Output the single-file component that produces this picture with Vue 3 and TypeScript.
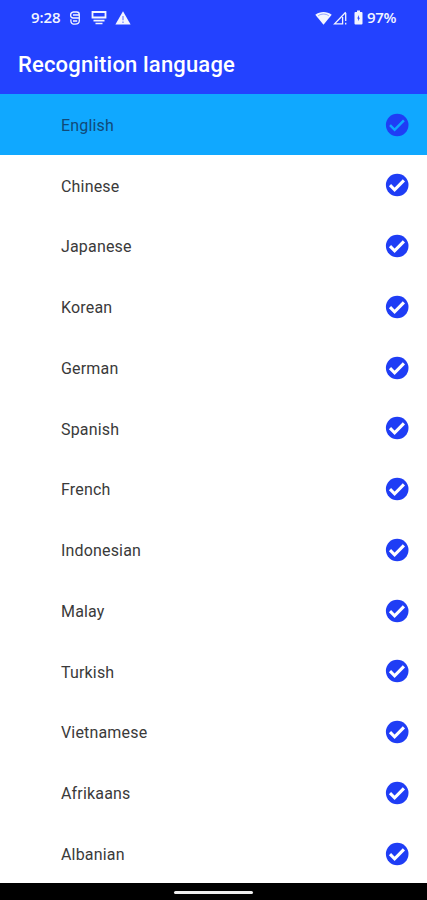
<script setup lang="ts">
import { ref } from 'vue'

const languages: string[] = [
  'English', 'Chinese', 'Japanese', 'Korean', 'German', 'Spanish', 'French',
  'Indonesian', 'Malay', 'Turkish', 'Vietnamese', 'Afrikaans', 'Albanian',
]
const selected = ref('English')
</script>

<template>
  <div class="screen">
    <header class="header">
      <div class="status">
        <span class="time">9:28</span>
        <svg class="ic-s" width="12" height="16" viewBox="0 0 12 16" fill="none" stroke="currentColor" stroke-width="1.3">
          <path d="M10.300 5H4M10.300 8H4.300Q1.600 8 1.600 5.200T4.400 2h3.300q2.600 0 2.600 2.600v6.200q0 3.400-4.200 3.400T1.900 11V9.200M4 11h4.200" />
        </svg>
        <svg class="ic-m" width="16" height="16" viewBox="0 0 16 16" fill="none" stroke="currentColor">
          <path stroke-width="1.8" d="M1.500 2h13v5.500h-13z" />
          <path stroke-width="1.7" d="M2.500 10.600h11M4.500 13.500h7" />
        </svg>
        <svg class="ic-w" width="16" height="14" viewBox="0 0 16 14">
          <path fill="currentColor" d="M8 .3 15.600 13.500H.4z" />
          <path stroke="#2342ff" stroke-width="1.1" opacity=".7" d="M8 5v4.200M8 10.500v1.400" />
        </svg>
        <span class="gap"></span>
        <svg class="ic-wifi" width="17" height="14" viewBox="0 0 17 14">
          <path fill="currentColor" d="M.3 3.800C5 .1 12 .1 16.700 3.800L8.500 13.800z" />
          <path fill="none" stroke="#2342ff" stroke-width=".9" opacity=".5" d="M3.200 4.800c3-2.300 7.600-2.300 10.600 0" />
        </svg>
        <svg class="ic-sig" width="14" height="14" viewBox="0 0 14 14" fill="none" stroke="currentColor" stroke-width="1.300">
          <path d="M12.700 1.200 1.600 12.800h8V6" />
          <path d="M12.700 2v8M12.700 11.700v1.800" />
        </svg>
        <svg class="ic-bat" width="9" height="15" viewBox="0 0 9 15">
          <path fill="currentColor" d="M3 .4h3v1.500h1.500q1 0 1 1v10.500q0 1-1 1h-6q-1 0-1-1V2.900q0-1 1-1H3z" />
          <path fill="#2342ff" d="M4.900 5 3.200 8.600h1v2.600L5.900 7.800H4.900z" />
        </svg>
        <span class="pct">97%</span>
      </div>
      <h1 class="title">Recognition language</h1>
    </header>
    <ul class="list">
      <li
        v-for="name in languages"
        :key="name"
        class="row"
        :class="{ active: name === selected }"
        @click="selected = name"
      >
        <span class="name">{{ name }}</span>
        <svg class="check" width="24" height="24" viewBox="0 0 24 24">
          <circle cx="12.200" cy="12" r="11.300" fill="#1f3df5" />
          <path class="tick" d="m5 12.200 4.600 4.600 9.300-9.500" fill="none" />
        </svg>
      </li>
    </ul>
    <footer class="nav"><span class="pill"></span></footer>
  </div>
</template>

<style>
body {
  margin: 0;
}
</style>

<style scoped>
.screen {
  display: flex;
  flex-direction: column;
  width: 427px;
  height: 900px;
  overflow: hidden;
  background: #fff;
  font-family: Roboto, sans-serif;
}
.header {
  flex: none;
  height: 94px;
  background: #2342ff;
  color: #fff;
}
.status {
  display: flex;
  align-items: center;
  box-sizing: border-box;
  height: 35px;
  padding: 0 29px 0 31px;
  color: #f3f5ff;
}
.status svg {
  flex: none;
}
.time,
.pct {
  padding-bottom: 2px;
  font: 600 15px/18px "Open Sans", sans-serif;
}
.time {
  width: 38px;
  letter-spacing: -0.1px;
}
.ic-m {
  margin-left: 10px;
}
.ic-w {
  margin-left: 8px;
}
.gap {
  flex: 1;
}
.ic-sig {
  margin-left: 1px;
}
.ic-bat {
  margin-left: 7px;
}
.pct {
  width: 31px;
  margin-left: 4px;
  letter-spacing: -0.3px;
}
.title {
  margin: 0;
  padding: 15px 0 0 18px;
  font-size: 22px;
  line-height: 30px;
  font-weight: 500;
  letter-spacing: 0.17px;
  white-space: nowrap;
}
.list {
  flex: none;
  margin: 0;
  padding: 0;
  list-style: none;
  height: 789px;
  overflow: hidden;
}
.row {
  display: flex;
  align-items: center;
  justify-content: space-between;
  box-sizing: border-box;
  height: 60.75px;
  padding: 0 18px 0 61px;
  color: #3a3a3a;
}
.active {
  background: #10a8ff;
  color: #104a78;
}
.name {
  font-size: 16px;
  line-height: 20px;
  letter-spacing: 0.17px;
  padding-top: 3px;
}
.check {
  margin-top: 0.5px;
}
.tick {
  stroke: #fff;
  stroke-width: 3.1;
}
.active .tick {
  stroke: #10a8ff;
  stroke-width: 2.5;
}
.nav {
  flex: 1;
  display: flex;
  justify-content: center;
  align-items: center;
  background: #000;
}
.pill {
  width: 79px;
  height: 3px;
  margin-top: 2px;
  border-radius: 2px;
  background: #eee;
}
</style>
